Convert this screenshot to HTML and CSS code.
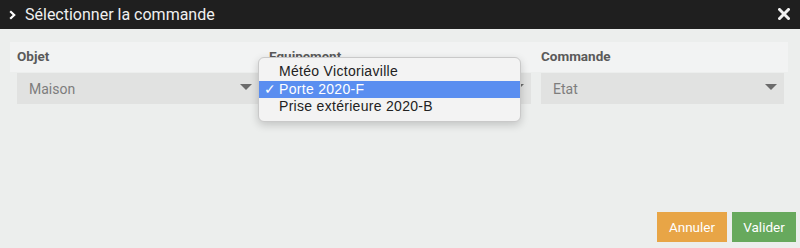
FILE: index.html
```html
<!DOCTYPE html>
<html lang="fr">
<head>
<meta charset="utf-8">
<title>Sélectionner la commande</title>
<link rel="stylesheet" href="styles.css">
</head>
<body>
<div class="dialog">
  <header class="titlebar">
    <div class="title">
      <svg class="chev" width="7" height="10" viewBox="0 0 7 10"><path d="M1.2 1.2 L5.2 5 L1.2 8.8" fill="none" stroke="#fff" stroke-width="2.2"/></svg>
      <span>Sélectionner la commande</span>
    </div>
    <svg class="close" width="12" height="12" viewBox="0 0 12 12"><path d="M1.5 1.5 L10.5 10.5 M10.5 1.5 L1.5 10.5" stroke="#f2f2f2" stroke-width="3" stroke-linecap="square"/></svg>
  </header>
  <main class="content">
    <div class="form">
      <div class="labels">
        <div class="label">Objet</div>
        <div class="label">Equipement</div>
        <div class="label">Commande</div>
      </div>
      <div class="selects">
        <div class="select"><span>Maison</span><i class="caret"></i></div>
        <div class="select"><i class="caret"></i></div>
        <div class="select"><span>Etat</span><i class="caret"></i></div>
      </div>
      <ul class="menu">
        <li class="item">Météo Victoriaville</li>
        <li class="item selected"><span class="check">✓</span>Porte 2020-F</li>
        <li class="item">Prise extérieure 2020-B</li>
      </ul>
    </div>
    <div class="actions">
      <button class="btn cancel">Annuler</button>
      <button class="btn ok">Valider</button>
    </div>
  </main>
</div>
</body>
</html>
```

FILE: styles.css
```css
html, body {
  margin: 0;
  padding: 0;
}
body {
  width: 800px;
  height: 248px;
  overflow: hidden;
  background: #eceeed;
  font-family: Roboto, "Liberation Sans", sans-serif;
}
.dialog {
  display: flex;
  flex-direction: column;
  height: 248px;
}
.titlebar {
  height: 29px;
  background: #1f1f1f;
  display: flex;
  align-items: center;
  justify-content: space-between;
  padding: 0 10px 0 9px;
  flex: none;
}
.title {
  display: flex;
  align-items: center;
  gap: 9px;
  color: #f0f0f0;
  font-size: 16px;
  margin-top: -1px;
}
.chev { display: block; margin-top: 1px; }
.close { display: block; margin-top: -1px; }
.content {
  flex: 1;
  display: flex;
  flex-direction: column;
  justify-content: space-between;
  padding: 13px 4px 6px 10px;
}
.form {
  position: relative;
}
.labels {
  display: grid;
  grid-template-columns: 242px 262px 243px;
  column-gap: 10px;
  background: #f2f3f3;
  height: 30px;
  padding-left: 7px;
  width: 778px;
  box-sizing: border-box;
}
.label {
  font-size: 13.5px;
  font-weight: 700;
  color: #5a5a5a;
  padding-top: 6px;
}
.selects {
  display: grid;
  grid-template-columns: 242px 262px 243px;
  column-gap: 10px;
  padding: 1px 0 0 7px;
}
.select {
  position: relative;
  height: 31px;
  background: #e1e2e1;
  display: flex;
  align-items: center;
  padding-left: 12px;
  font-size: 14px;
  color: #7d7d7d;
}
.caret {
  position: absolute;
  right: 7px;
  top: 11px;
  width: 0;
  height: 0;
  border-left: 6px solid transparent;
  border-right: 6px solid transparent;
  border-top: 6px solid #6b6b6b;
}
.menu {
  position: absolute;
  left: 248px;
  top: 15px;
  width: 263px;
  height: 65px;
  box-sizing: border-box;
  margin: 0;
  padding: 5px 0;
  list-style: none;
  background: #f3f3f3;
  border: 1px solid #c9c9c9;
  border-radius: 6px;
  box-shadow: 0 3px 8px rgba(0,0,0,0.18);
  font-family: "Liberation Sans", Arial, sans-serif;
  font-size: 14px;
  letter-spacing: 0.3px;
  color: #222;
}
.item {
  position: relative;
  height: 17.5px;
  line-height: 17.5px;
  padding-left: 20px;
}
.item.selected {
  background: #5a8ef0;
  color: #fff;
}
.check {
  position: absolute;
  left: 5px;
  top: 0;
}
.actions {
  display: flex;
  justify-content: flex-end;
  gap: 5px;
}
.btn {
  height: 30px;
  border: none;
  color: #fff;
  font-family: Roboto, "Liberation Sans", sans-serif;
  font-size: 13.5px;
  padding: 0;
}
.cancel {
  width: 70px;
  background: #e8a546;
}
.ok {
  width: 64px;
  background: #67a95d;
}
```
